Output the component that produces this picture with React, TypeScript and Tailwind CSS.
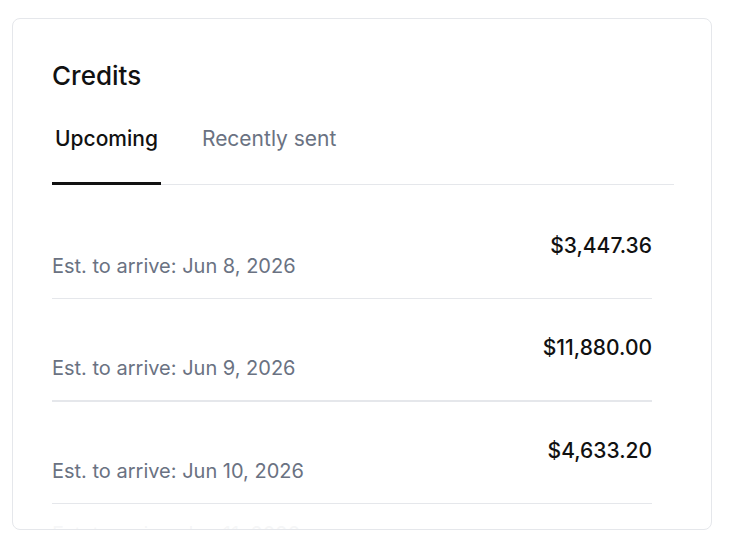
const credits = [
  { date: "Jun 8, 2026", amount: "$3,447.36" },
  { date: "Jun 9, 2026", amount: "$11,880.00" },
  { date: "Jun 10, 2026", amount: "$4,633.20" },
];

const CreditRow = ({ date, amount, thick }: { date: string; amount: string; thick?: boolean }) => {
  return (
    <div className={`flex items-start justify-between pt-[36px] pb-[19px] border-gray-200 ${thick ? "border-b-2" : "border-b"}`}>
      <div className="pt-[20px]">
        <p className="text-[20px] leading-[26px] text-gray-500">Est. to arrive: {date}</p>
      </div>
      <p className="text-[21px] leading-[26px] font-medium text-[#111]">{amount}</p>
    </div>
  );
};

export default function App() {
  return (
    <div className="min-h-screen bg-white pt-[18px] pl-[12px]" style={{ fontFamily: "Inter, 'Liberation Sans', sans-serif" }}>
      <div className="w-[700px] h-[512px] overflow-hidden rounded-lg border border-gray-200 bg-white pl-[39px] pr-[37px] pt-[39px]">
        <h2 className="text-[26px] leading-[36px] font-medium text-[#111]">Credits</h2>
        <div className="mt-[31px] flex items-end gap-[38px] border-b border-gray-200">
          <button className="-mb-px border-b-[3px] border-[#111] px-[3px] pb-[29px] text-[21px] leading-[28px] font-medium text-[#111]">
            Upcoming
          </button>
          <button className="-mb-px border-b-[3px] border-transparent px-[3px] pb-[29px] text-[21px] leading-[28px] text-gray-500">
            Recently sent
          </button>
        </div>
        <div className="mr-[22px] pt-[12px]">
          {credits.map((c, i) => (
            <CreditRow key={c.date} date={c.date} amount={c.amount} thick={i === 1} />
          ))}
          <div className="pt-[17px] opacity-[0.06]">
            <p className="text-[20px] leading-[26px] text-gray-500">Est. to arrive: Jun 11, 2026</p>
          </div>
        </div>
      </div>
    </div>
  );
}
